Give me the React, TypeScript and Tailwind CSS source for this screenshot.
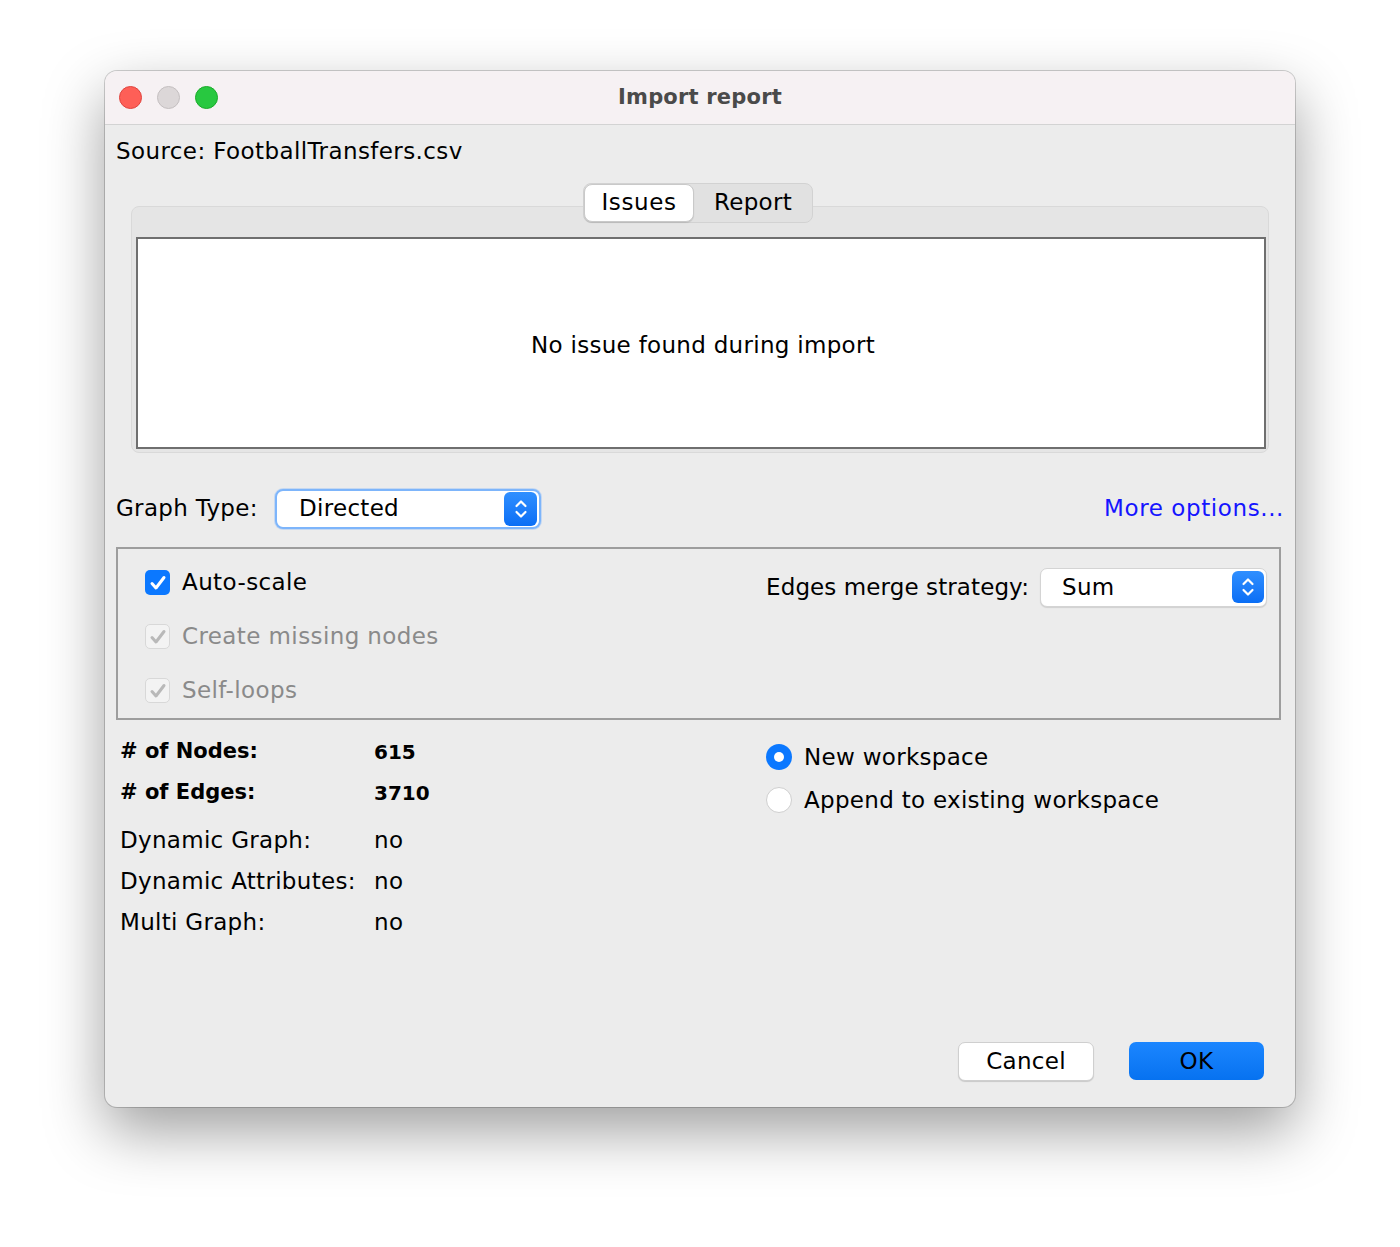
import React from 'react';

const font = { fontFamily: '"DejaVu Sans", "Liberation Sans", sans-serif' };

// Blue up/down stepper used by the combo boxes
function Stepper({ className }: { className: string }) {
  return (
    <div className={`flex items-center justify-center rounded-[6px] bg-gradient-to-b from-[#2f8fff] to-[#0a6ef5] ${className}`}>
      <svg width="16" height="24" viewBox="0 0 16 24" fill="none">
        <path d="M3.5 9 L8 4.5 L12.5 9" stroke="white" strokeWidth="2.2" strokeLinecap="round" strokeLinejoin="round" />
        <path d="M3.5 15 L8 19.5 L12.5 15" stroke="white" strokeWidth="2.2" strokeLinecap="round" strokeLinejoin="round" />
      </svg>
    </div>
  );
}

function Check({ checked, disabled, label }: { checked: boolean; disabled?: boolean; label: string }) {
  return (
    <div className="flex h-[54px] items-center gap-[12px]">
      {disabled ? (
        <div className="flex h-[25px] w-[25px] items-center justify-center rounded-[5px] border border-[#d8d8d8] bg-[#f3f3f3]">
          <svg width="20" height="20" viewBox="0 0 20 20" fill="none">
            <path d="M4 10.5 L8 15 L16 4.5" stroke="#b9b9b9" strokeWidth="3" strokeLinecap="round" strokeLinejoin="round" />
          </svg>
        </div>
      ) : (
        <div className="flex h-[25px] w-[25px] items-center justify-center rounded-[5px] bg-[#0b78ff]">
          {checked && (
            <svg width="20" height="20" viewBox="0 0 20 20" fill="none">
              <path d="M4 10.5 L8 15 L16 4.5" stroke="white" strokeWidth="3" strokeLinecap="round" strokeLinejoin="round" />
            </svg>
          )}
        </div>
      )}
      <span className={`text-[23px] tracking-[0.4px] ${disabled ? 'text-[#8a8a8a]' : 'text-black'}`}>{label}</span>
    </div>
  );
}

function Radio({ selected, label }: { selected: boolean; label: string }) {
  return (
    <div className="flex h-[43px] items-center gap-[12px]">
      {selected ? (
        <div className="flex h-[26px] w-[26px] items-center justify-center rounded-full bg-[#0b78ff]">
          <div className="h-[10px] w-[10px] rounded-full bg-white" />
        </div>
      ) : (
        <div className="h-[26px] w-[26px] rounded-full border border-[#cfcfcf] bg-white" />
      )}
      <span className="text-[23px] tracking-[0.3px] text-black">{label}</span>
    </div>
  );
}

const stats = [
  { label: '# of Nodes:', value: '615' },
  { label: '# of Edges:', value: '3710' },
];

const flags = ['Dynamic Graph:', 'Dynamic Attributes:', 'Multi Graph:'];

export default function App() {
  return (
    <div className="min-h-[1247px] w-[1400px] bg-white pl-[105px] pt-[71px]" style={font}>
      <div className="flex h-[1036px] w-[1190px] flex-col overflow-hidden rounded-[12px] bg-[#ececec] shadow-[0_24px_60px_rgba(0,0,0,0.38),0_0_0_1px_rgba(0,0,0,0.18)]">
        {/* title bar */}
        <div className="flex h-[54px] shrink-0 items-center border-b border-[#d3d3d3] bg-[#f6f1f3] px-[14px]">
          <div className="flex w-[200px] items-center gap-[15px]">
            <div className="h-[23px] w-[23px] rounded-full border border-[#e0443e] bg-[#fe5f57]" />
            <div className="h-[23px] w-[23px] rounded-full border border-[#c4bfc0] bg-[#dcd7d8]" />
            <div className="h-[23px] w-[23px] rounded-full border border-[#1aab29] bg-[#28c840]" />
          </div>
          <div className="flex-1 pr-[200px] text-center text-[21px] font-bold tracking-[0.2px] text-[#4a4a4a]">Import report</div>
        </div>

        <div className="flex flex-1 flex-col">
          <div className="px-[11px] pt-[9px] text-[23px] tracking-[0.4px] text-black">Source: FootballTransfers.csv</div>

          {/* tabs */}
          <div className="relative z-10 mt-[14px] flex justify-center pr-[4px]">
            <div className="flex h-[40px] items-stretch rounded-[8px] border border-[#d2d2d2] bg-[#e1e1e1]">
              <div className="flex w-[110px] items-center justify-center rounded-[8px] border border-[#c9c9c9] bg-white text-[23px] tracking-[0.6px] text-black shadow-[0_1px_1px_rgba(0,0,0,0.12)]">Issues</div>
              <div className="flex w-[118px] items-center justify-center text-[23px] tracking-[0.3px] text-black">Report</div>
            </div>
          </div>
          <div className="mx-[26px] -mt-[17px] rounded-[8px] border border-[#d9d9d9] bg-[#e5e5e5] pb-[3px] pl-[4px] pr-[2px] pt-[30px]">
            <div className="flex h-[212px] items-center justify-center border-2 border-[#6f6f6f] bg-white pl-[4px] pt-[5px] text-[23px] tracking-[0.3px] text-black">
              No issue found during import
            </div>
          </div>

          {/* graph type */}
          <div className="mt-[36px] flex items-center px-[11px]">
            <span className="w-[159px] text-[23px] tracking-[0.3px] text-black">Graph Type:</span>
            <div className="flex h-[40px] w-[266px] items-center justify-between rounded-[8px] border-2 border-[#7db5fb] bg-white pl-[22px] pr-[2px] shadow-[0_0_0_1px_rgba(125,181,251,0.35)]">
              <span className="text-[23px] tracking-[0.3px] text-black">Directed</span>
              <Stepper className="h-[34px] w-[33px]" />
            </div>
            <div className="flex-1" />
            <span className="text-[23px] tracking-[0.6px] text-[#1515ff]">More options...</span>
          </div>

          {/* options */}
          <div className="mx-[11px] mr-[14px] mt-[18px] flex h-[173px] border-2 border-[#9d9d9d] pl-[27px] pr-[12px] pt-[7px]">
            <div className="flex flex-1 flex-col">
              <Check checked label="Auto-scale" />
              <Check checked disabled label="Create missing nodes" />
              <Check checked disabled label="Self-loops" />
            </div>
            <div className="flex h-[54px] items-center pt-[9px]">
              <span className="mr-[11px] text-[23px] tracking-[0.1px] text-black">Edges merge strategy:</span>
              <div className="flex h-[39px] w-[227px] items-center justify-between rounded-[7px] border border-[#d4d4d4] bg-white pl-[21px] pr-[2px] shadow-[0_1px_1px_rgba(0,0,0,0.12)]">
                <span className="text-[23px] tracking-[0.3px] text-black">Sum</span>
                <Stepper className="h-[32px] w-[32px]" />
              </div>
            </div>
          </div>

          {/* statistics + workspace */}
          <div className="mt-[12px] flex px-[15px]">
            <div className="w-[646px]">
              {stats.map((s) => (
                <div key={s.label} className="flex h-[41px] items-center font-bold text-black">
                  <span className="w-[254px] text-[21px] tracking-[0px]">{s.label}</span>
                  <span className="text-[20px]">{s.value}</span>
                </div>
              ))}
              <div className="mt-[6px]">
                {flags.map((f) => (
                  <div key={f} className="flex h-[41px] items-center text-[23px] tracking-[0.3px] text-black">
                    <span className="w-[254px]">{f}</span>
                    <span>no</span>
                  </div>
                ))}
              </div>
            </div>
            <div className="pt-[4px]">
              <Radio selected label="New workspace" />
              <Radio selected={false} label="Append to existing workspace" />
            </div>
          </div>

          <div className="flex-1" />

          {/* dialog buttons */}
          <div className="flex justify-end gap-[35px] pb-[26px] pr-[31px]">
            <button className="h-[39px] w-[136px] rounded-[7px] border border-[#cfcfcf] bg-white text-[23px] tracking-[0.3px] text-black shadow-[0_1px_1px_rgba(0,0,0,0.15)]" style={font}>
              Cancel
            </button>
            <button className="h-[38px] w-[135px] rounded-[7px] bg-gradient-to-b from-[#1b86ff] to-[#0672f0] text-[23px] tracking-[0.3px] text-black" style={font}>
              OK
            </button>
          </div>
        </div>
      </div>
    </div>
  );
}
